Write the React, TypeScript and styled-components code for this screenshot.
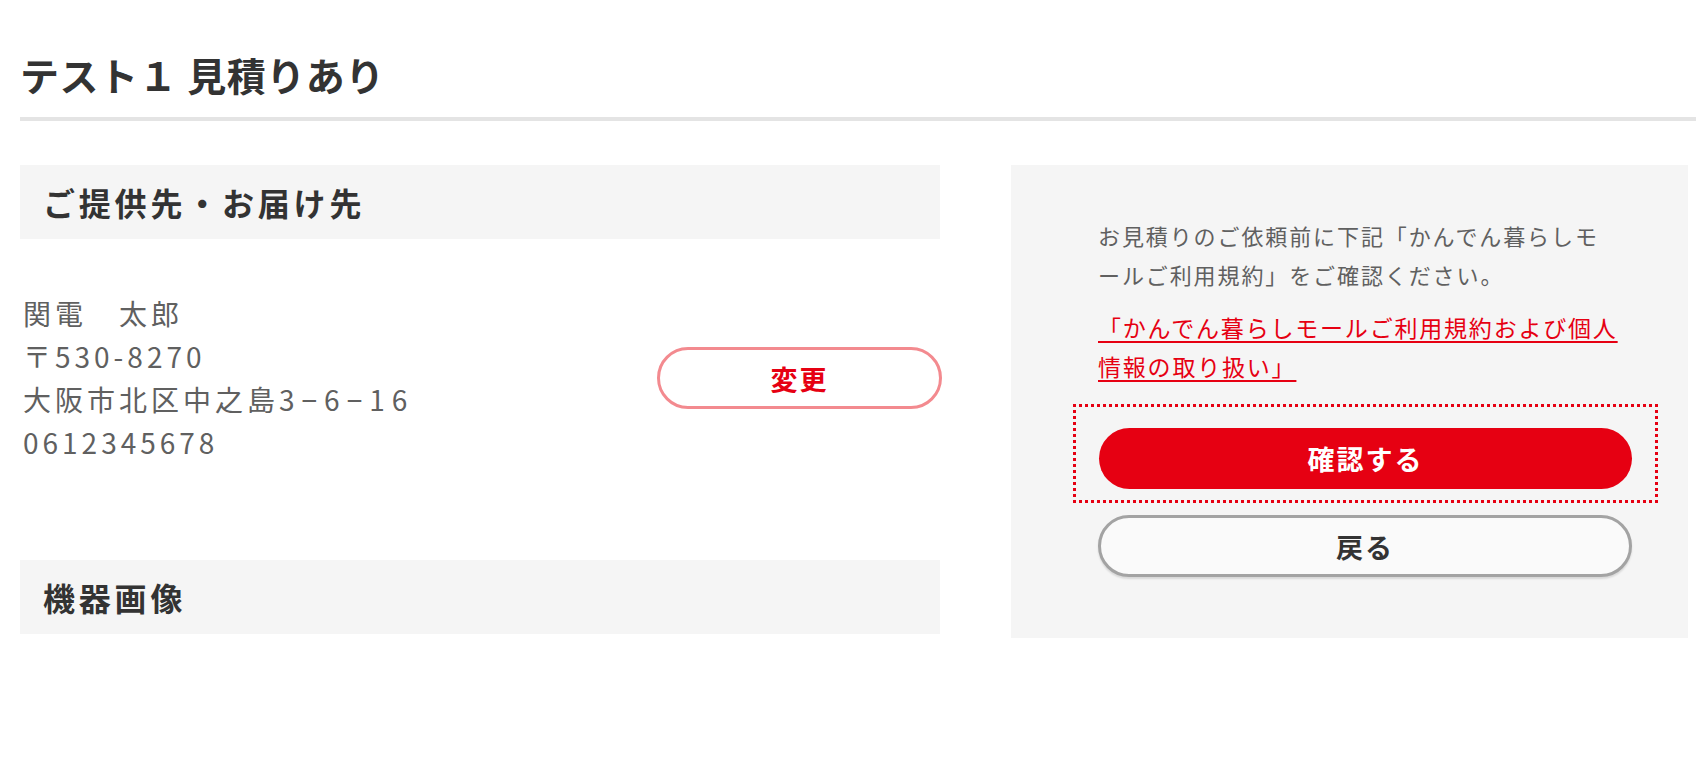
import React from 'react'
import styled, { createGlobalStyle } from 'styled-components'

const GlobalStyle = createGlobalStyle`
  html, body {
    margin: 0;
    padding: 0;
    background: #fff;
  }
  body {
    font-family: 'Noto Sans CJK JP', 'Noto Sans', sans-serif;
    color: #333;
  }
`

const Page = styled.div`
  padding: 54px 8px 40px 20px;
`
const Title = styled.h1`
  margin: 0;
  font-size: 39px;
  line-height: 40px;
  font-weight: 700;
  letter-spacing: 0.5px;
  color: #333;
`
const Divider = styled.hr`
  margin: 23px -8px 0 0;
  border: none;
  height: 4px;
  background: #e4e4e4;
`
const Columns = styled.div`
  display: grid;
  grid-template-columns: 920px 1fr;
  column-gap: 71px;
  align-items: start;
  margin-top: 44px;
`
const LeftColumn = styled.div`
  display: flex;
  flex-direction: column;
`
const SectionHeader = styled.h2<{ $gap?: number }>`
  margin: ${(p) => p.$gap ?? 0}px 0 0;
  height: 74px;
  display: flex;
  align-items: center;
  padding-left: 23px;
  background: #f5f5f5;
  font-size: 32px;
  font-weight: 700;
  letter-spacing: 3.8px;
  color: #333;
`
const AddressRow = styled.div`
  display: flex;
  align-items: center;
  justify-content: space-between;
  margin-top: 53px;
`
const Address = styled.div`
  padding-left: 3px;
  font-size: 28px;
  line-height: 43px;
  letter-spacing: 4px;
  color: #606060;
`
const HouseNumber = styled.span`
  letter-spacing: 7px;
`
const OutlineButton = styled.button<{ $tone: 'red' | 'gray' }>`
  display: flex;
  align-items: center;
  justify-content: center;
  width: ${(p) => (p.$tone === 'red' ? '285px' : '100%')};
  height: 62px;
  box-sizing: border-box;
  border-radius: 31px;
  border: 3px solid ${(p) => (p.$tone === 'red' ? '#f38a8f' : '#a3a3a3')};
  background: ${(p) => (p.$tone === 'red' ? '#fff' : '#fafafa')};
  color: ${(p) => (p.$tone === 'red' ? '#e60012' : '#333')};
  box-shadow: ${(p) => (p.$tone === 'red' ? 'none' : '0 2px 2px rgba(0,0,0,0.12)')};
  font-family: inherit;
  font-size: 27px;
  font-weight: 700;
  letter-spacing: 2px;
  padding: 0;
  margin-right: -2px;
`
const SidePanel = styled.aside`
  background: #f5f5f5;
  padding: 51px 56px 61px 87px;
`
const Notice = styled.p`
  margin: 0;
  font-size: 22px;
  line-height: 39px;
  letter-spacing: 1.9px;
  color: #606060;
  white-space: nowrap;
`
const TermsLink = styled.a`
  display: block;
  margin-top: 14px;
  font-size: 23px;
  line-height: 39px;
  letter-spacing: 1.8px;
  color: #e60012;
  text-decoration: underline;
  text-decoration-thickness: 2px;
  text-underline-offset: 4px;
  white-space: nowrap;
`
const FocusFrame = styled.div`
  margin: 18px -26px 0 -25px;
  padding: 24px 26px 14px 26px;
  background:
    linear-gradient(90deg, #e60012 50%, transparent 0) top left / 6px 3px repeat-x,
    linear-gradient(90deg, #e60012 50%, transparent 0) bottom left / 6px 3px repeat-x,
    linear-gradient(180deg, #e60012 50%, transparent 0) top left / 3px 6px repeat-y,
    linear-gradient(180deg, #e60012 50%, transparent 0) top right / 3px 6px repeat-y;
`
const PrimaryButton = styled.button`
  display: flex;
  align-items: center;
  justify-content: center;
  width: 100%;
  height: 61px;
  border: none;
  border-radius: 31px;
  background: #e60012;
  color: #fff;
  font-family: inherit;
  font-size: 27px;
  font-weight: 700;
  letter-spacing: 2px;
  padding: 0;
`
const BackWrap = styled.div`
  margin-top: 12px;
`

export default function App() {
  return (
    <>
      <GlobalStyle />
      <Page>
        <Title>テスト１ 見積りあり</Title>
        <Divider />
        <Columns>
          <LeftColumn>
            <SectionHeader>ご提供先・お届け先</SectionHeader>
            <AddressRow>
              <Address>
                関電　太郎
                <br />
                〒530-8270
                <br />
                大阪市北区中之島<HouseNumber>3−6−16</HouseNumber>
                <br />
                0612345678
              </Address>
              <OutlineButton $tone="red">変更</OutlineButton>
            </AddressRow>
            <SectionHeader $gap={96}>機器画像</SectionHeader>
          </LeftColumn>
          <SidePanel>
            <Notice>
              お見積りのご依頼前に下記「かんでん暮らしモ
              <br />
              ールご利用規約」をご確認ください。
            </Notice>
            <TermsLink href="#">
              「かんでん暮らしモールご利用規約および個人
              <br />
              情報の取り扱い」
            </TermsLink>
            <FocusFrame>
              <PrimaryButton>確認する</PrimaryButton>
            </FocusFrame>
            <BackWrap>
              <OutlineButton $tone="gray">戻る</OutlineButton>
            </BackWrap>
          </SidePanel>
        </Columns>
      </Page>
    </>
  )
}
